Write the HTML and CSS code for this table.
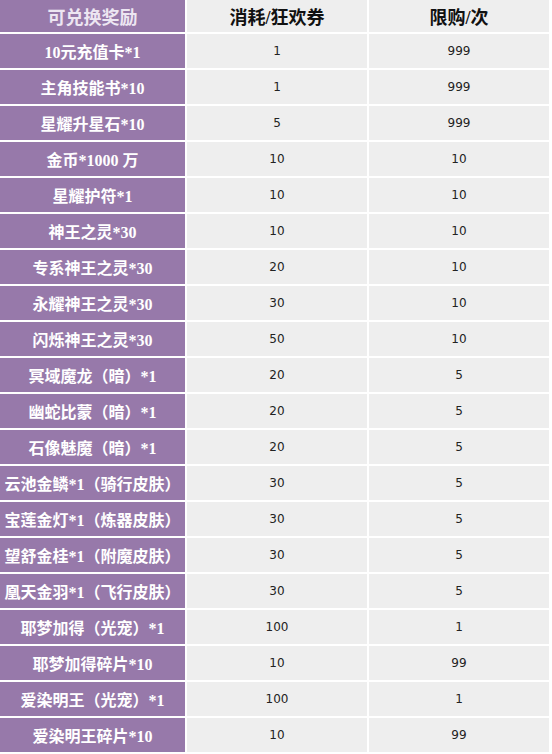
FILE: index.html
```html
<!DOCTYPE html>
<html lang="zh-CN">
<head>
<meta charset="utf-8">
<title>可兑换奖励</title>
<link rel="stylesheet" href="styles.css">
</head>
<body>
<table class="rewards">
  <colgroup>
    <col class="col-name">
    <col class="col-cost">
    <col class="col-limit">
  </colgroup>
  <thead>
    <tr>
      <th class="name head-name">可兑换奖励</th>
      <th class="head">消耗/狂欢券</th>
      <th class="head">限购/次</th>
    </tr>
  </thead>
  <tbody>
    <tr><td class="name">10元充值卡*1</td><td class="num">1</td><td class="num">999</td></tr>
    <tr><td class="name">主角技能书*10</td><td class="num">1</td><td class="num">999</td></tr>
    <tr><td class="name">星耀升星石*10</td><td class="num">5</td><td class="num">999</td></tr>
    <tr><td class="name">金币*1000 万</td><td class="num">10</td><td class="num">10</td></tr>
    <tr><td class="name">星耀护符*1</td><td class="num">10</td><td class="num">10</td></tr>
    <tr><td class="name">神王之灵*30</td><td class="num">10</td><td class="num">10</td></tr>
    <tr><td class="name">专系神王之灵*30</td><td class="num">20</td><td class="num">10</td></tr>
    <tr><td class="name">永耀神王之灵*30</td><td class="num">30</td><td class="num">10</td></tr>
    <tr><td class="name">闪烁神王之灵*30</td><td class="num">50</td><td class="num">10</td></tr>
    <tr><td class="name">冥域魔龙（暗）*1</td><td class="num">20</td><td class="num">5</td></tr>
    <tr><td class="name">幽蛇比蒙（暗）*1</td><td class="num">20</td><td class="num">5</td></tr>
    <tr><td class="name">石像魅魔（暗）*1</td><td class="num">20</td><td class="num">5</td></tr>
    <tr><td class="name">云池金鳞*1（骑行皮肤）</td><td class="num">30</td><td class="num">5</td></tr>
    <tr><td class="name">宝莲金灯*1（炼器皮肤）</td><td class="num">30</td><td class="num">5</td></tr>
    <tr><td class="name">望舒金桂*1（附魔皮肤）</td><td class="num">30</td><td class="num">5</td></tr>
    <tr><td class="name">凰天金羽*1（飞行皮肤）</td><td class="num">30</td><td class="num">5</td></tr>
    <tr><td class="name">耶梦加得（光宠）*1</td><td class="num">100</td><td class="num">1</td></tr>
    <tr><td class="name">耶梦加得碎片*10</td><td class="num">10</td><td class="num">99</td></tr>
    <tr><td class="name">爱染明王（光宠）*1</td><td class="num">100</td><td class="num">1</td></tr>
    <tr><td class="name">爱染明王碎片*10</td><td class="num">10</td><td class="num">99</td></tr>
  </tbody>
</table>
</body>
</html>
```
FILE: styles.css
```css
html, body {
  margin: 0;
  padding: 0;
  background: #ffffff;
}

.rewards {
  border-collapse: separate;
  border-spacing: 0;
  table-layout: fixed;
  width: 551px;
  font-family: "Liberation Serif", "Noto Sans CJK SC", serif;
}

.col-name { width: 187px; }
.col-cost { width: 182px; }
.col-limit { width: 182px; }

.rewards th,
.rewards td {
  padding: 0;
  text-align: center;
  vertical-align: middle;
  border-right: 2px solid #ffffff;
  border-bottom: 2px solid #ffffff;
  background: #eeeeee;
  white-space: nowrap;
  overflow: hidden;
}

.rewards thead th {
  height: 32px;
  font-size: 18px;
  font-weight: bold;
}

.rewards tbody td {
  height: 34px;
}

.name {
  background: #9779aa !important;
  color: #ffffff;
  font-size: 16px;
  font-weight: bold;
}

.rewards thead .head-name {
  color: #ede6f2;
  font-size: 18px;
}

.head {
  color: #111111;
}

.num {
  font-family: "DejaVu Sans", sans-serif;
  font-size: 12px;
  color: #222222;
}
```
